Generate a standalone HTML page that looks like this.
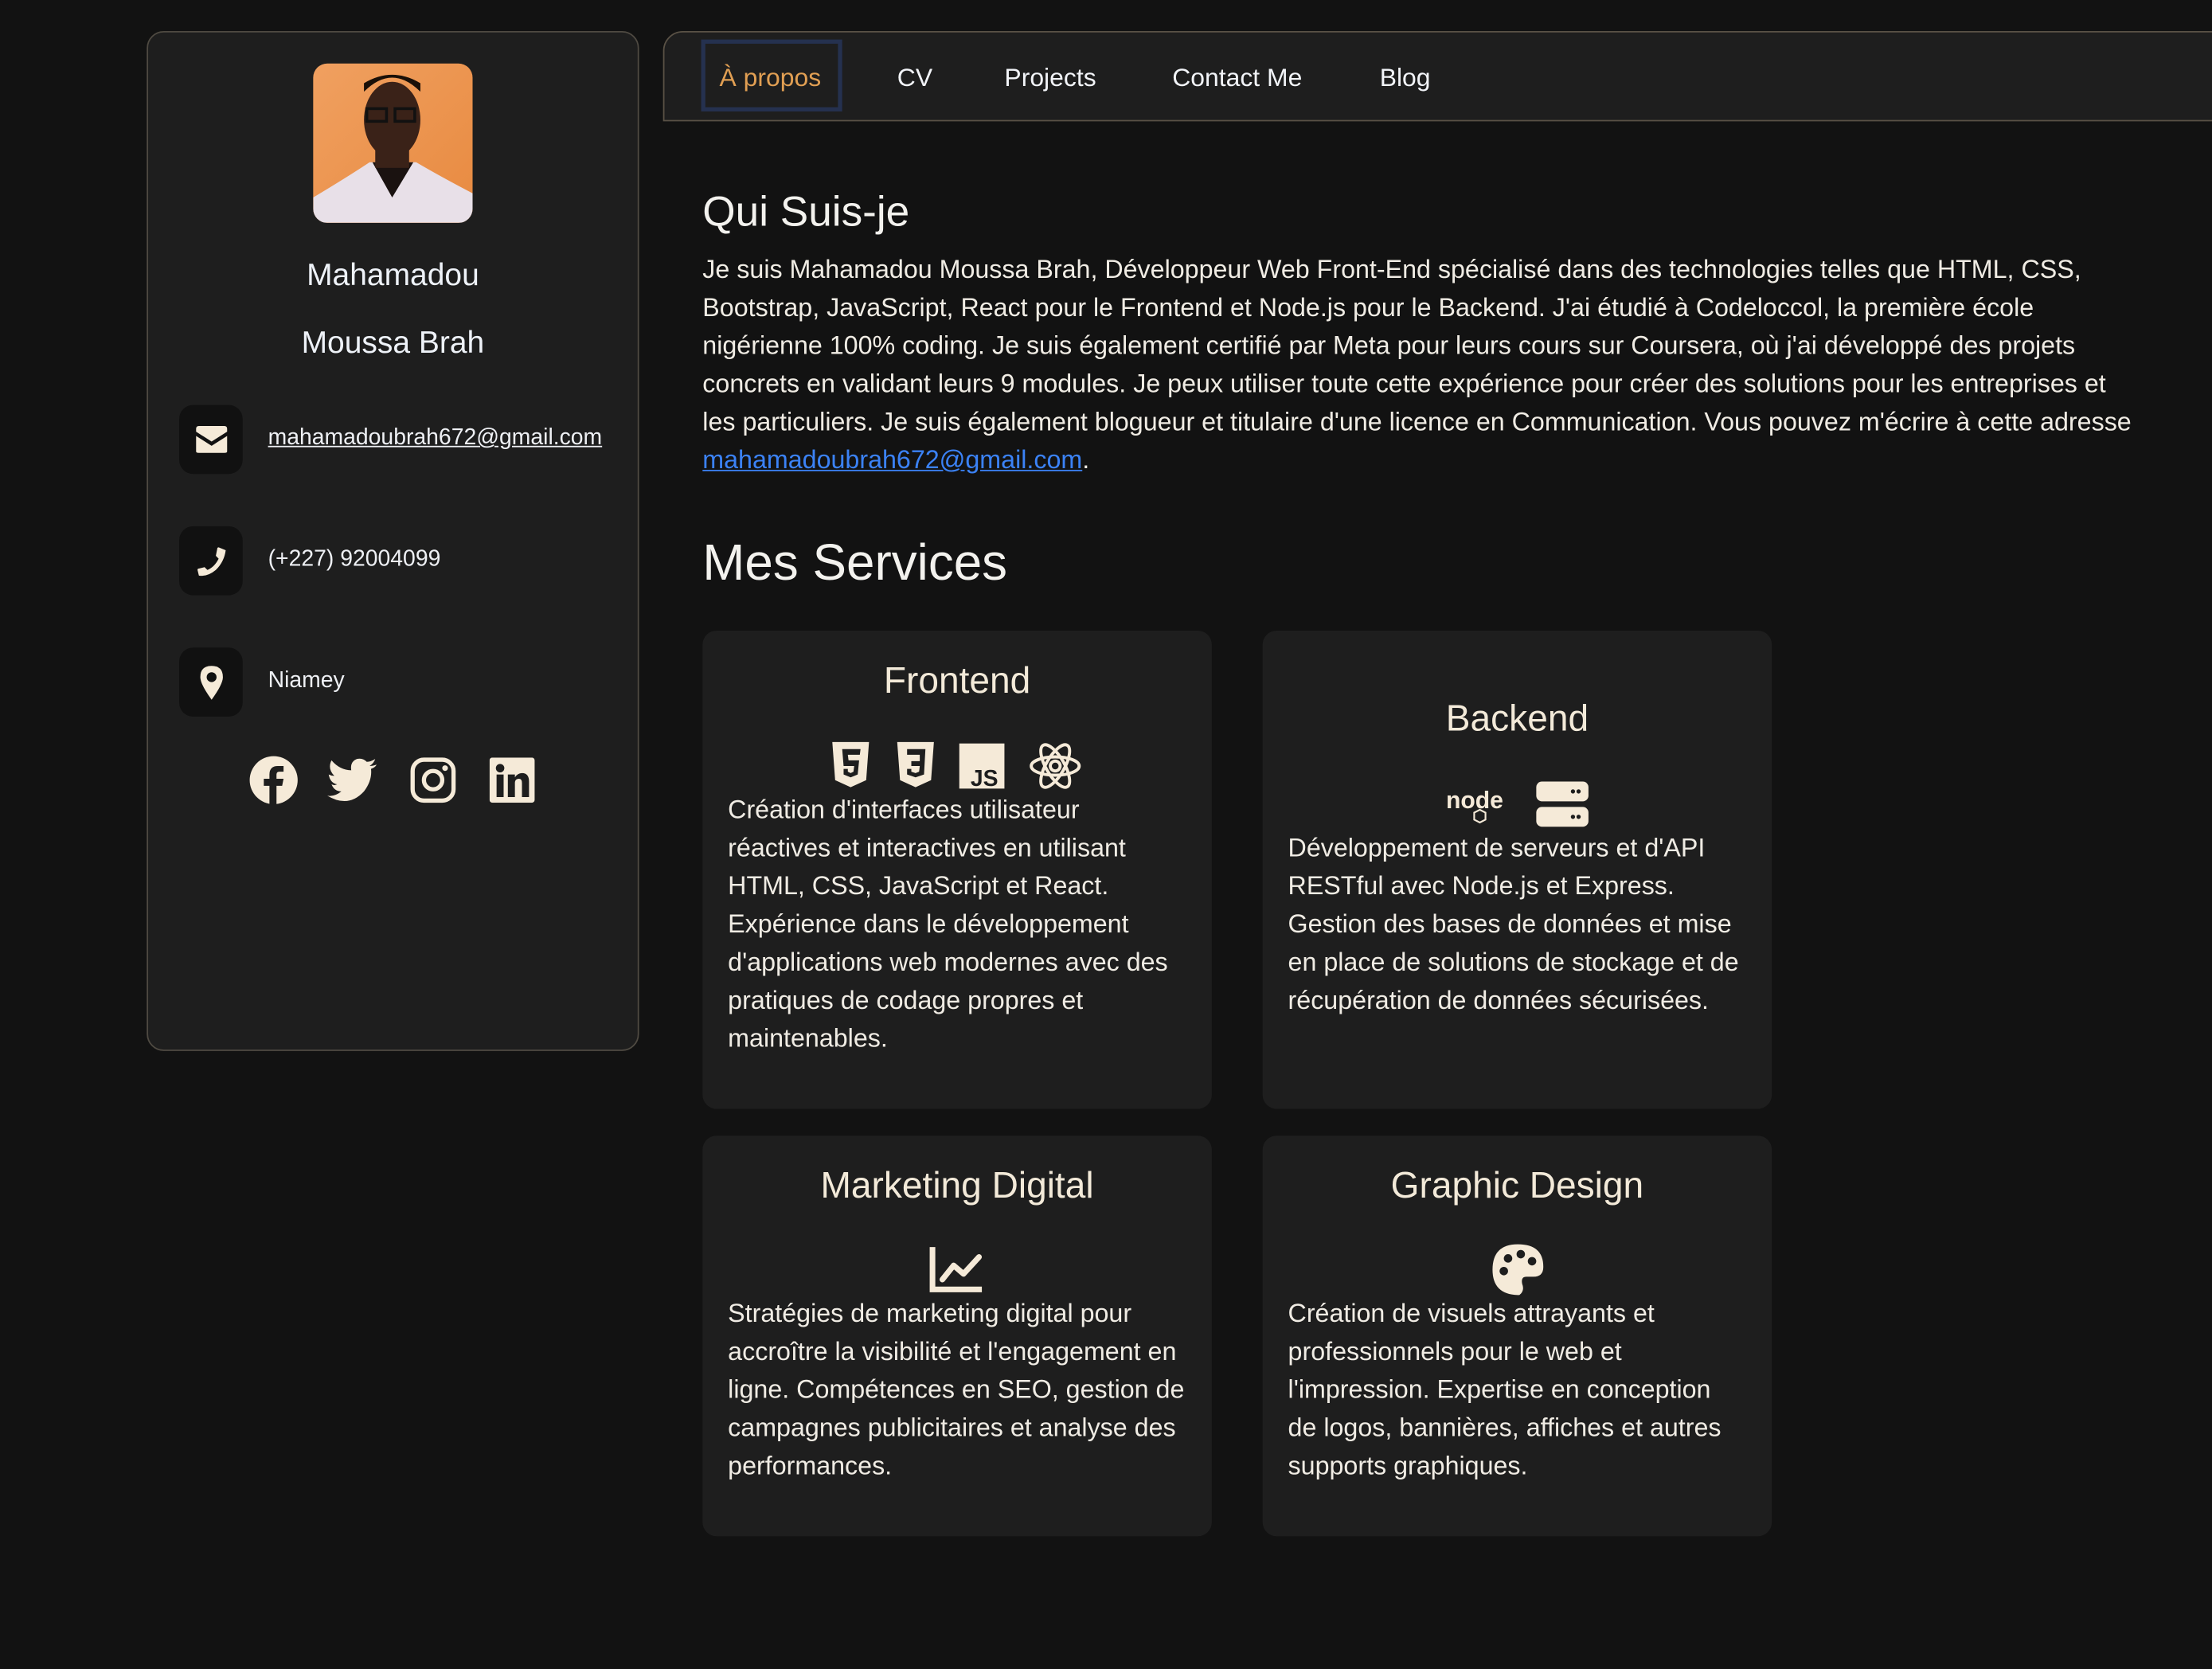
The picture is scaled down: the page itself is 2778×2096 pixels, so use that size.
<!DOCTYPE html>
<html><head><meta charset="utf-8"><style>
html,body{margin:0;padding:0;background:#121212;overflow:hidden}
body{width:2778px;height:2096px}
#w{position:absolute;left:0;top:0;width:1568px;height:1183px;transform:scale(1.77168);transform-origin:0 0;font-family:"Liberation Sans",sans-serif;color:#f0ece4}
.abs{position:absolute}
.side{left:104px;top:22px;width:347px;height:721px;background:#1e1e1e;border:1.5px solid #4f4a42;border-radius:12px}
.name{width:349px;text-align:center;font-size:22px;color:#eef2f8}
.ib{width:45px;height:49px;background:#111;border-radius:10px;display:flex;align-items:center;justify-content:center}
.ct{font-size:16px;color:#eef0f4}
.nav{left:470px;top:22px;width:1110px;height:62px;background:#1e1e1e;border:1.5px solid #5a5246;border-radius:14px 0 0 0}
.ni{font-size:18px;color:#f2f4f8;top:45px}
.p{font-size:18.2px;line-height:27px;white-space:nowrap;color:#f0ece4}
.card{background:#1e1e1e;border-radius:10px;width:361px}
.ctl{width:361px;text-align:center;font-size:26px;color:#f3ead9}
</style></head><body><div id="w">
<div class="abs side"></div>
<div class="abs" style="left:222px;top:45px;width:113px;height:113px;border-radius:10px;overflow:hidden;background:linear-gradient(135deg,#f0a060,#e88a40)">
<svg width="113" height="113" viewBox="0 0 113 113"><path d="M0 95 Q25 80 40 70 L73 70 Q90 80 113 92 L113 113 L0 113Z" fill="#e8e0e8"/><path d="M42 70 L56 95 L71 70Z" fill="#1a1210"/><ellipse cx="56" cy="40" rx="20" ry="27" fill="#3a2218"/><rect x="44" y="60" width="24" height="14" fill="#3a2218"/><rect x="38" y="32" width="14" height="9" fill="none" stroke="#111" stroke-width="2"/><rect x="58" y="32" width="14" height="9" fill="none" stroke="#111" stroke-width="2"/><path d="M36 20 Q56 0 76 20 L76 14 Q56 2 36 14Z" fill="#1a1008"/></svg></div>
<div class="abs name" style="left:104px;top:182px">Mahamadou</div>
<div class="abs name" style="left:104px;top:230px">Moussa Brah</div>

<div class="abs ib" style="left:127px;top:287px"><svg width="24" height="20" viewBox="0 0 24 20"><path d="M1 2 Q1 0 3 0 L21 0 Q23 0 23 2 L23 4 L12 11 L1 4Z M1 7 L12 14 L23 7 L23 18 Q23 19 21 19 L3 19 Q1 19 1 18Z" fill="#f5ead8"/></svg></div>
<div class="abs ct" style="left:190px;top:302px;text-decoration:underline">mahamadoubrah672@gmail.com</div>
<div class="abs ib" style="left:127px;top:373px"><svg width="24" height="24" viewBox="0 0 24 24"><path d="M22 4 L17 2 Q16 2 16 3 L15 8 L17 10 Q14 16 9 18 L7 16 L3 17 Q2 17 2 18 L3 22 Q9 23 15 18 Q21 12 22 4Z" fill="#f5ead8"/></svg></div>
<div class="abs ct" style="left:190px;top:388px">(+227) 92004099</div>
<div class="abs ib" style="left:127px;top:459px"><svg width="18" height="26" viewBox="0 0 18 26"><path d="M9 1 Q17 1 17 9 Q17 14 9 25 Q1 14 1 9 Q1 1 9 1Z" fill="#f5ead8"/><circle cx="9" cy="9" r="3.5" fill="#111"/></svg></div>
<div class="abs ct" style="left:190px;top:474px">Niamey</div>

<svg class="abs" style="left:176px;top:535px" width="36" height="36" viewBox="0 0 36 36"><circle cx="18" cy="18" r="17" fill="#f5ead8"/><path d="M20 36 L20 22 L24 22 L25 17 L20 17 L20 14 Q20 12 22 12 L25 12 L25 8 L21 8 Q15 8 15 14 L15 17 L11 17 L11 22 L15 22 L15 36Z" fill="#1e1e1e"/></svg>
<svg class="abs" style="left:232px;top:537px" width="36" height="32" viewBox="0 0 36 32"><path d="M35 5 Q32 6 30 6 Q33 4 34 1 Q31 3 28 3 Q25 0 21 1 Q16 3 17 9 Q9 9 3 2 Q0 8 5 13 Q3 13 1 12 Q2 18 7 19 Q5 20 3 19 Q5 24 10 24 Q5 28 0 27 Q15 36 26 24 Q32 16 31 8 Q34 7 35 5Z" fill="#f5ead8"/></svg>
<svg class="abs" style="left:290px;top:536px" width="34" height="34" viewBox="0 0 34 34"><rect x="2.5" y="2.5" width="29" height="29" rx="8" fill="none" stroke="#f5ead8" stroke-width="3"/><circle cx="17" cy="17" r="6.5" fill="none" stroke="#f5ead8" stroke-width="3"/><circle cx="25.5" cy="8.5" r="2" fill="#f5ead8"/></svg>
<svg class="abs" style="left:347px;top:537px" width="32" height="32" viewBox="0 0 32 32"><rect width="32" height="32" rx="2" fill="#f5ead8"/><rect x="5" y="12" width="5" height="16" fill="#1e1e1e"/><circle cx="7.5" cy="7.5" r="3" fill="#1e1e1e"/><path d="M13 12 L18 12 L18 14 Q20 11 23 11 Q28 11 28 17 L28 28 L23 28 L23 18 Q23 15 21 15 Q18 15 18 18 L18 28 L13 28Z" fill="#1e1e1e"/></svg>

<div class="abs nav"></div>
<div class="abs" style="left:497px;top:28px;width:94px;height:45px;border:3px solid #25314f"></div>
<div class="abs ni" style="left:510px;color:#e19f53">À propos</div>
<div class="abs ni" style="left:636px">CV</div>
<div class="abs ni" style="left:712px">Projects</div>
<div class="abs ni" style="left:831px">Contact Me</div>
<div class="abs ni" style="left:978px">Blog</div>

<div class="abs" style="left:498px;top:134px;font-size:30px;color:#f3f2ee">Qui Suis-je</div>
<div class="abs p" style="left:498px;top:178px">Je suis Mahamadou Moussa Brah, Développeur Web Front-End spécialisé dans des technologies telles que HTML, CSS,<br>Bootstrap, JavaScript, React pour le Frontend et Node.js pour le Backend. J'ai étudié à Codeloccol, la première école<br>nigérienne 100% coding. Je suis également certifié par Meta pour leurs cours sur Coursera, où j'ai développé des projets<br>concrets en validant leurs 9 modules. Je peux utiliser toute cette expérience pour créer des solutions pour les entreprises et<br>les particuliers. Je suis également blogueur et titulaire d'une licence en Communication. Vous pouvez m'écrire à cette adresse<br><span style="color:#3b82f6;text-decoration:underline">mahamadoubrah672@gmail.com</span>.</div>

<div class="abs" style="left:498px;top:378px;font-size:36px;color:#f3f2ee">Mes Services</div>

<div class="abs card" style="left:498px;top:447px;height:339px"></div>
<div class="abs ctl" style="left:498px;top:467px">Frontend</div>
<svg class="abs" style="left:588px;top:525px" width="180" height="36" viewBox="0 0 180 36"><g fill="#f5ead8"><path d="M2 1 L28 1 L26 28 L15 33 L4 28Z"/><path d="M48 1 L74 1 L72 28 L61 33 L50 28Z"/><rect x="92" y="2" width="32" height="32"/></g>
<path d="M9 6 L22 6 L21.5 10 L13 10 L13.5 14 L21 14 L20 24 L15 26 L10 24 L10 20 L13 20 L13 22 L15 23 L17 22 L17.5 18 L10 18Z" fill="#1e1e1e"/>
<path d="M55 6 L68 6 L67 24 L61 26 L55 24 L55 20 L58 20 L58 22 L61 23 L63.5 22 L64 18 L58 18 L58 14.5 L64 14.5 L64 10 L55 10Z" fill="#1e1e1e"/>
<text x="100" y="32" font-family="Liberation Sans" font-weight="bold" font-size="16" fill="#1e1e1e">JS</text>
<g fill="none" stroke="#f5ead8" stroke-width="2.2" transform="translate(160 18)"><ellipse rx="17" ry="6.5"/><ellipse rx="17" ry="6.5" transform="rotate(60)"/><ellipse rx="17" ry="6.5" transform="rotate(-60)"/><circle r="3.5"/></g></svg>
<div class="abs p" style="left:516px;top:561px">Création d'interfaces utilisateur<br>réactives et interactives en utilisant<br>HTML, CSS, JavaScript et React.<br>Expérience dans le développement<br>d'applications web modernes avec des<br>pratiques de codage propres et<br>maintenables.</div>

<div class="abs card" style="left:895px;top:447px;height:339px"></div>
<div class="abs ctl" style="left:895px;top:494px">Backend</div>
<svg class="abs" style="left:1024px;top:553px" width="104" height="34" viewBox="0 0 104 34"><text x="1" y="20" font-family="Liberation Sans" font-weight="bold" font-size="17" fill="#f5ead8">node</text><path d="M25 21 L29 23 L29 28 L25 30 L21 28 L21 23Z" fill="none" stroke="#f5ead8" stroke-width="1.2"/><rect x="65" y="1" width="37" height="14" rx="4" fill="#f5ead8"/><rect x="65" y="19" width="37" height="14" rx="4" fill="#f5ead8"/><g fill="#1e1e1e"><circle cx="91" cy="8" r="1.5"/><circle cx="95" cy="8" r="1.5"/><circle cx="91" cy="26" r="1.5"/><circle cx="95" cy="26" r="1.5"/></g></svg>
<div class="abs p" style="left:913px;top:588px">Développement de serveurs et d'API<br>RESTful avec Node.js et Express.<br>Gestion des bases de données et mise<br>en place de solutions de stockage et de<br>récupération de données sécurisées.</div>

<div class="abs card" style="left:498px;top:805px;height:284px"></div>
<div class="abs ctl" style="left:498px;top:825px">Marketing Digital</div>
<svg class="abs" style="left:659px;top:883px" width="38" height="34" viewBox="0 0 38 34"><path d="M2 1 L2 31 L37 31" fill="none" stroke="#f5ead8" stroke-width="4"/><path d="M9 24 L17 14 L24 20 L35 8" fill="none" stroke="#f5ead8" stroke-width="4" stroke-linejoin="round" stroke-linecap="round"/></svg>
<div class="abs p" style="left:516px;top:918px">Stratégies de marketing digital pour<br>accroître la visibilité et l'engagement en<br>ligne. Compétences en SEO, gestion de<br>campagnes publicitaires et analyse des<br>performances.</div>

<div class="abs card" style="left:895px;top:805px;height:284px"></div>
<div class="abs ctl" style="left:895px;top:825px">Graphic Design</div>
<svg class="abs" style="left:1057px;top:881px" width="38" height="38" viewBox="0 0 38 38"><path d="M19 1 Q37 1 37 17 Q37 24 30 24 L25 24 Q21 24 22 29 Q24 34 20 37 Q1 37 1 19 Q1 1 19 1Z" fill="#f5ead8"/><g fill="#1e1e1e"><circle cx="9" cy="20" r="3"/><circle cx="12" cy="11" r="3"/><circle cx="21" cy="8" r="3"/><circle cx="29" cy="13" r="3"/></g></svg>
<div class="abs p" style="left:913px;top:918px">Création de visuels attrayants et<br>professionnels pour le web et<br>l'impression. Expertise en conception<br>de logos, bannières, affiches et autres<br>supports graphiques.</div>
</div></body></html>
